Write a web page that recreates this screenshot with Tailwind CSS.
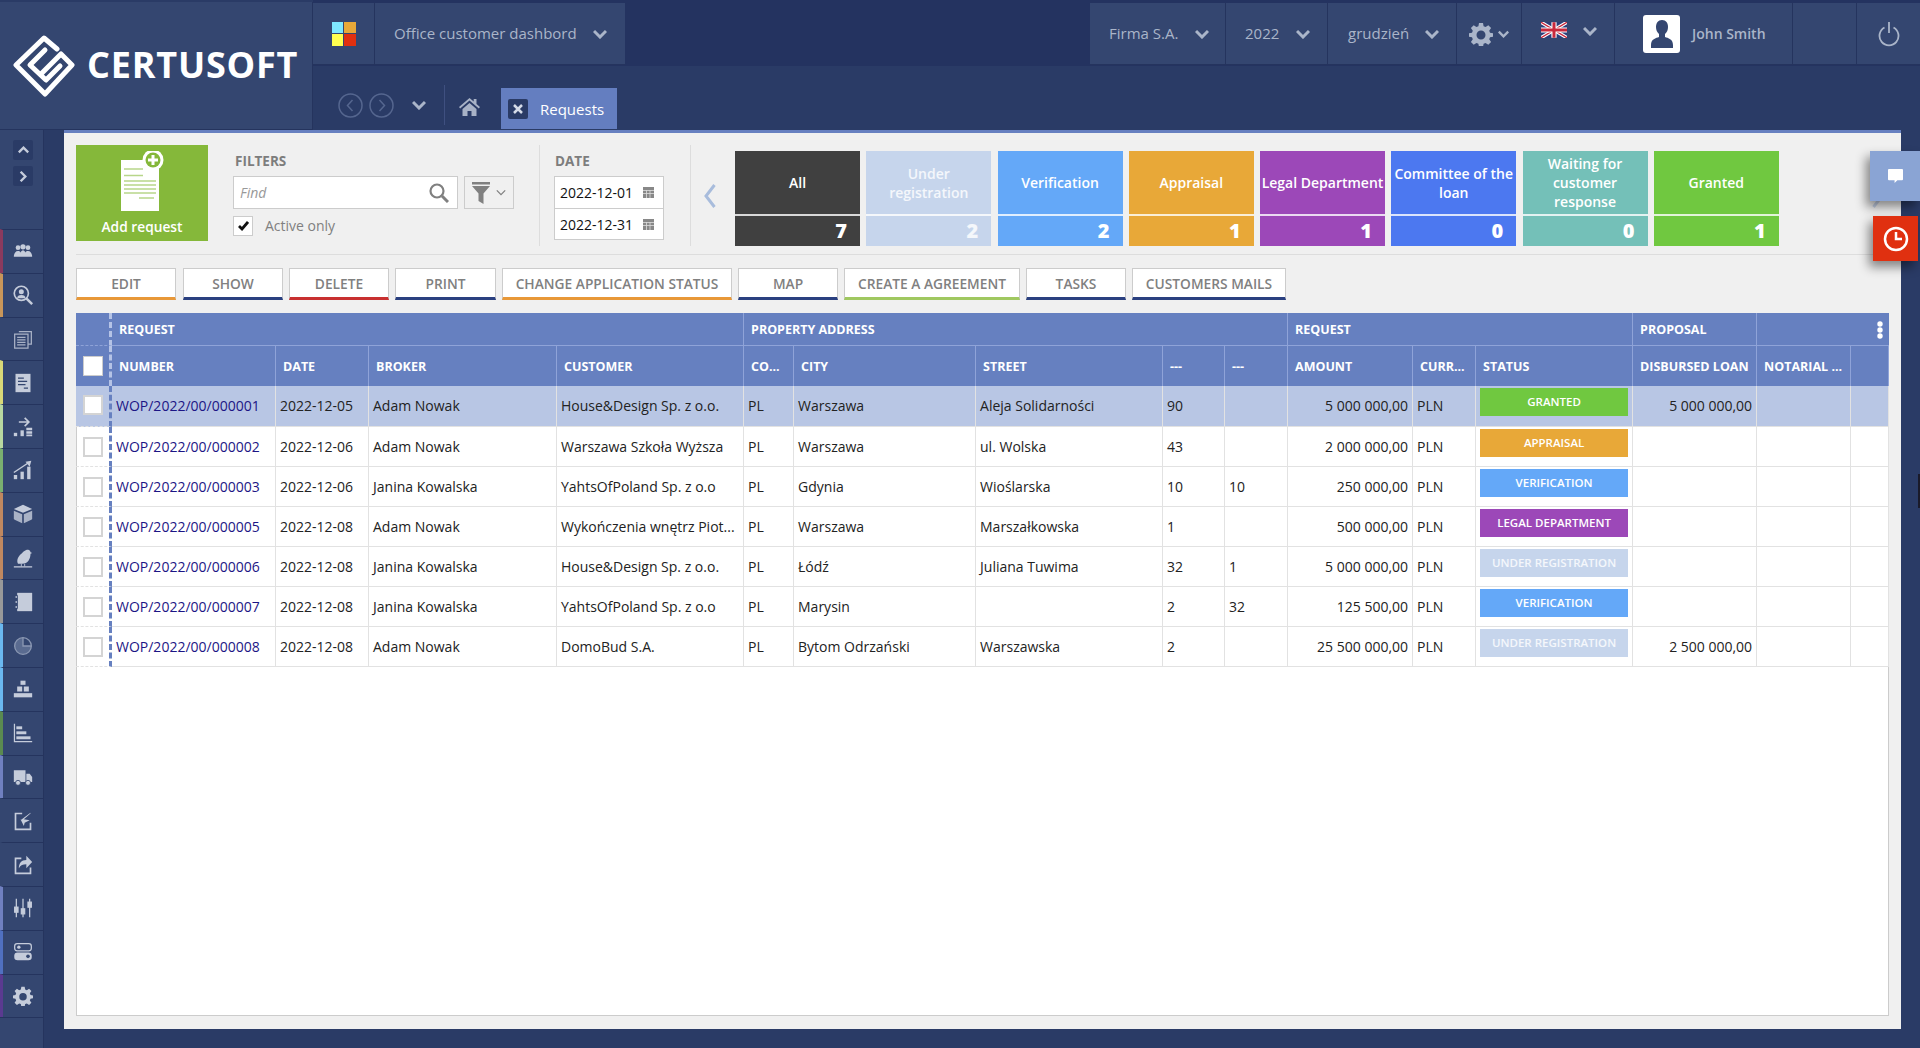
<!DOCTYPE html>
<html lang="en">
<head>
<meta charset="UTF-8">
<title>Requests</title>
<script src="https://cdn.jsdelivr.net/npm/@tailwindcss/browser@4"></script>
</head>
<body class="w-[1920px] h-[1048px] overflow-hidden relative bg-[#2a3b66] font-['Open_Sans',sans-serif] text-[14px] text-[#222]">

<!-- Header -->
<header class="flex h-[130px]">
  <div class="w-[313px] h-[128px] mt-[2px] -mb-[2px] bg-[#344670] border-r border-b border-[#25345e] flex items-center pl-[13px]">
    <svg class="w-[62px] h-[62px] shrink-0" viewBox="0 0 62 62" fill="none" stroke="#fff" stroke-width="5" stroke-linejoin="round" stroke-linecap="round">
      <path d="M44 14 31 3 3 30l29 29 27-29-11-11-19 19"/>
      <path d="M32 15 17 30l16 15 14-14"/>
    </svg>
    <span class="ml-[12px] -mt-[2px] text-[36px] leading-none font-bold text-white tracking-[0.8px]">CERTUSOFT</span>
  </div>
  <div class="flex-1 flex flex-col">
    <div class="h-[66px] bg-[#243360] pt-[3px] flex text-[#aab5c9] text-[15px]">
      <div class="w-[62px] h-[62px] bg-[#344670] border-r border-b border-[#25345e] flex items-center justify-center">
        <div class="grid grid-cols-2 w-[24px] h-[24px] gap-px">
          <span class="bg-[#7fe8ff]"></span><span class="bg-[#e8a838]"></span><span class="bg-[#ffff50]"></span><span class="bg-[#e03010]"></span>
        </div>
      </div>
      <div class="w-[250px] h-[62px] bg-[#344670] border-b border-[#25345e] flex items-center pl-[19px]">
        Office customer dashbord
        <svg class="w-[14px] h-[10px] ml-[16px]" viewBox="0 0 14 10" fill="none" stroke="#aab5c9" stroke-width="3"><path d="m1 2 6 6 6-6"/></svg>
      </div>
      <div class="flex-1"></div>
      <div class="w-[136px] h-[62px] bg-[#344670] border-r border-b border-[#25345e] flex items-center pl-[19px]">
        Firma S.A.
        <svg class="w-[14px] h-[10px] ml-[17px]" viewBox="0 0 14 10" fill="none" stroke="#aab5c9" stroke-width="3"><path d="m1 2 6 6 6-6"/></svg>
      </div>
      <div class="w-[102px] h-[62px] bg-[#344670] border-r border-b border-[#25345e] flex items-center pl-[19px]">
        2022
        <svg class="w-[14px] h-[10px] ml-[17px]" viewBox="0 0 14 10" fill="none" stroke="#aab5c9" stroke-width="3"><path d="m1 2 6 6 6-6"/></svg>
      </div>
      <div class="w-[129px] h-[62px] bg-[#344670] border-r border-b border-[#25345e] flex items-center pl-[20px]">
        grudzień
        <svg class="w-[14px] h-[10px] ml-[16px]" viewBox="0 0 14 10" fill="none" stroke="#aab5c9" stroke-width="3"><path d="m1 2 6 6 6-6"/></svg>
      </div>
      <div class="w-[65px] h-[62px] bg-[#344670] border-r border-b border-[#25345e] flex items-center pl-[12px]">
        <svg class="w-[24px] h-[24px]" viewBox="0 0 24 24" fill="#aab5c9"><path fill-rule="evenodd" d="M10 1h4l.6 3.200 2 .8L19.300 3.200l2.800 2.800L20.200 8.700l.8 2L24 11.300v3.400l-3 .6-.8 2 1.900 2.700-2.800 2.800-2.700-1.900-2 .8-.6 3.300h-4l-.6-3.300-2-.8-2.700 1.900-2.800-2.800 1.900-2.700-.8-2L0 14.700v-3.400l3-.6.800-2L1.900 6l2.800-2.800L7.400 5l2-.8zM12 8.500a4.500 4.500 0 1 0 0 9 4.500 4.500 0 0 0 0-9z"/></svg>
        <svg class="w-[11px] h-[8px] ml-[5px]" viewBox="0 0 14 10" fill="none" stroke="#aab5c9" stroke-width="3"><path d="m1 2 6 6 6-6"/></svg>
      </div>
      <div class="w-[93px] h-[62px] bg-[#344670] border-r border-b border-[#25345e] flex items-start pt-[19px] pl-[19px]">
        <svg class="w-[26px] h-[16px]" viewBox="0 0 60 36">
          <rect width="60" height="36" fill="#2b3f7c"/>
          <path d="M0 0l60 36M60 0 0 36" stroke="#fff" stroke-width="8"/>
          <path d="M0 0l60 36M60 0 0 36" stroke="#c8283c" stroke-width="3"/>
          <path d="M30 0v36M0 18h60" stroke="#fff" stroke-width="12"/>
          <path d="M30 0v36M0 18h60" stroke="#c8283c" stroke-width="7"/>
        </svg>
        <svg class="w-[14px] h-[10px] ml-[16px] mt-[4px]" viewBox="0 0 14 10" fill="none" stroke="#aab5c9" stroke-width="3"><path d="m1 2 6 6 6-6"/></svg>
      </div>
      <div class="w-[178px] h-[62px] bg-[#344670] border-r border-b border-[#25345e] flex items-center pl-[28px] text-[14px] font-semibold">
        <div class="w-[37px] h-[38px] bg-white rounded-[3px] flex items-center justify-center">
          <svg class="w-[24px] h-[30px]" viewBox="0 0 24 30" fill="#344670"><path d="M12 1c-4 0-6 3-6 7 0 3 1 5 3 7v3c-3 1-8 2-8 8v3h22v-3c0-6-5-7-8-8v-3c2-2 3-4 3-7 0-4-2-7-6-7z"/></svg>
        </div>
        <span class="ml-[12px]">John Smith</span>
      </div>
      <div class="w-[64px] h-[62px] bg-[#344670] border-r border-b border-[#25345e]"></div>
      <div class="w-[63px] h-[62px] bg-[#344670] border-b border-[#25345e] flex items-center justify-center">
        <svg class="w-[22px] h-[26px]" viewBox="0 0 22 26" fill="none" stroke="#aab5c9" stroke-width="1.800"><path d="M6.500 6.500a9.500 9.500 0 1 0 9 0M11 1v11"/></svg>
      </div>
    </div>
    <div class="h-[64px] flex items-end pl-[25px] text-white">
      <div class="flex items-center h-[42px] mb-[4px] text-[#55668f]">
        <svg class="w-[25px] h-[25px]" viewBox="0 0 25 25" fill="none" stroke="#55668f" stroke-width="1.500"><circle cx="12.500" cy="12.500" r="11.500"/><path d="m14.500 7-5 5.500 5 5.500"/></svg>
        <svg class="w-[25px] h-[25px] ml-[6px]" viewBox="0 0 25 25" fill="none" stroke="#55668f" stroke-width="1.500"><circle cx="12.500" cy="12.500" r="11.500"/><path d="m10.500 7 5 5.500-5 5.500"/></svg>
        <svg class="w-[14px] h-[10px] ml-[18px]" viewBox="0 0 14 10" fill="none" stroke="#aab5c9" stroke-width="3"><path d="m1 2 6 6 6-6"/></svg>
      </div>
      <div class="w-px h-[40px] bg-[#3f5080] ml-[18px] mb-[5px]"></div>
      <svg class="w-[21px] h-[18px] ml-[14px] mb-[14px]" viewBox="0 0 21 18" fill="#a8b2c6"><path d="M10.500 0 0 9l1.200 1.400L10.500 2.500l9.300 7.900L21 9l-3.500-3V1h-2.800v2.600zM3.500 11v7h5v-5h4v5h5v-7l-7-6z"/></svg>
      <div class="ml-[21px] w-[116px] h-[41px] bg-[#647ec0] flex items-center pl-[7px] mb-px">
        <span class="w-[20px] h-[20px] bg-[#2a3b66] rounded-[2px] flex items-center justify-center">
          <svg class="w-[10px] h-[10px]" viewBox="0 0 10 10" stroke="#d5dbe8" stroke-width="2.500"><path d="m1 1 8 8M9 1 1 9"/></svg>
        </span>
        <span class="ml-[12px] pt-[2px] text-[15px]">Requests</span>
      </div>
    </div>
  </div>
</header>

<div class="flex">
  <!-- Sidebar -->
  <aside class="w-[44px] h-[918px] shrink-0 bg-[#344670] border-r border-[#25345e]">
    <div class="h-[99px] pt-[10px] pl-[13px]">
      <div class="w-[20px] h-[20px] bg-[#2a3b66] rounded-[2px] flex items-center justify-center">
        <svg class="w-[11px] h-[8px]" viewBox="0 0 14 10" fill="none" stroke="#c5ccdb" stroke-width="3"><path d="m1 8 6-6 6 6"/></svg>
      </div>
      <div class="w-[20px] h-[20px] mt-[6px] bg-[#2a3b66] rounded-[2px] flex items-center justify-center">
        <svg class="w-[8px] h-[11px]" viewBox="0 0 10 14" fill="none" stroke="#c5ccdb" stroke-width="3"><path d="m2 1 6 6-6 6"/></svg>
      </div>
    </div>
    <div class="[&>div]:h-[43.800px] [&>div]:border-t [&>div]:border-t-[#25345e] [&>div]:border-l-[3px] [&>div]:flex [&>div]:items-center [&>div]:justify-center [&_svg]:w-[20px] [&_svg]:h-[20px] border-b border-[#25345e]">
      <div class="border-l-[#8b3a5e]"><svg viewBox="0 0 24 24" fill="#c5ccdb"><circle cx="6" cy="8" r="2.800"/><circle cx="12" cy="7" r="3.200"/><circle cx="18" cy="8" r="2.800"/><path d="M1 19c0-4 2-7 5-7s3 2 3 2 1-3 3-3 3 3 3 3 0-2 3-2 5 3 5 7z"/></svg></div>
      <div class="border-l-[#c8965a]"><svg viewBox="0 0 24 24" fill="none" stroke="#c5ccdb" stroke-width="2"><circle cx="10" cy="10" r="8.500"/><path d="m16 16 7 7" stroke-width="3"/><circle cx="10" cy="8" r="3" fill="#c5ccdb" stroke="none"/><path d="M5 16c0-3 2-4 5-4s5 1 5 4z" fill="#c5ccdb" stroke="none"/></svg></div>
      <div class="border-l-transparent"><svg viewBox="0 0 24 24" fill="none" stroke="#a9b2c6" stroke-width="1.500"><path d="M7 3h15v15H18M4 6h14v17H2V6z"/><path d="M5 10h10M5 13h10M5 16h10M5 19h10"/></svg></div>
      <div class="border-l-[#d8d878]"><svg viewBox="0 0 24 24"><path fill-rule="evenodd" fill="#c5ccdb" d="M3 1h18v22H3z"/><path d="M6 6h7M6 10h11M6 14h9M13 18h5" stroke="#344670" stroke-width="1.500"/></svg></div>
      <div class="border-l-[#b8d8a0]"><svg viewBox="0 0 24 24" fill="#c5ccdb"><path d="M7 6h12M14 1l5 5-5 5" fill="none" stroke="#c5ccdb" stroke-width="2"/><rect x="1" y="19" width="4" height="4"/><rect x="9" y="16" width="4" height="7"/><path d="M16 13h7v3h-7zM16 17h7v3h-7zM16 21h7v2h-7z"/></svg></div>
      <div class="border-l-[#7ab070]"><svg viewBox="0 0 24 24" fill="#c5ccdb"><path d="M1 15 19 3" fill="none" stroke="#c5ccdb" stroke-width="1.800"/><path d="m15 2 7-1-2 7z"/><rect x="1" y="18" width="4" height="5"/><rect x="9" y="14" width="4" height="9"/><rect x="17" y="8" width="4" height="15"/></svg></div>
      <div class="border-l-[#c08860]"><svg viewBox="0 0 24 24" fill="#a9b2c6"><path d="M12 1 23 6 12 10.500 1 6z" fill="#c5ccdb"/><path d="M1 8l10 4.200V23L2 19l-1-1zM23 8l-10 4.200V23l9-4 1-1z"/></svg></div>
      <div class="border-l-[#c08860]"><svg viewBox="0 0 24 24" fill="#c5ccdb"><path d="M6 19c-2-4 0-9 4-12 2-2 4-5 8-5 2 0 3 2 3 3l2 1-2 1c0 6-3 12-10 12zM1 22h22v1.500H1z"/><path d="M10 19v3M14 19v3" stroke="#c5ccdb"/></svg></div>
      <div class="border-l-[#999]"><svg viewBox="0 0 24 24" fill="#c5ccdb"><path d="M5 1h18v22H5z"/><path d="M3 6h5M3 12h5M3 18h5" stroke="#c5ccdb" stroke-width="1.800"/><path d="M5 4h1v16H5z" fill="#344670"/></svg></div>
      <div class="border-l-[#6ab8f0]"><svg viewBox="0 0 24 24"><circle cx="12" cy="12" r="10" fill="#5a6b90" stroke="#8a97b2" stroke-width="1.600"/><path d="M12 3v9h9a9 9 0 0 0-9-9z" fill="#344670"/><path d="M12 2v10h10" fill="none" stroke="#8a97b2" stroke-width="1.600"/></svg></div>
      <div class="border-l-[#6ab8f0]"><svg viewBox="0 0 24 24" fill="#c5ccdb"><rect x="9" y="2" width="6" height="5"/><rect x="5" y="9" width="6" height="6"/><rect x="13" y="9" width="6" height="6"/><rect x="1" y="17" width="22" height="5"/></svg></div>
      <div class="border-l-[#5a8a50]"><svg viewBox="0 0 24 24" fill="#c5ccdb"><path d="M1 1h1.500v20.500H23V23H1z"/><rect x="4" y="4" width="7" height="3.500"/><rect x="4" y="10" width="12" height="3.500"/><rect x="4" y="16" width="17" height="3.500"/></svg></div>
      <div class="border-l-[#7080c0]"><svg viewBox="0 0 24 24" fill="#c5ccdb"><path d="M1 4h14v14H1zM16 8h4l3 4v6h-7z"/><circle cx="6" cy="19" r="3" stroke="#344670"/><circle cx="18" cy="19" r="3" stroke="#344670"/></svg></div>
      <div class="border-l-transparent"><svg viewBox="0 0 24 24" fill="none" stroke="#c5ccdb" stroke-width="2"><path d="M11 3H3v19h18v-8"/><path d="M21 2 9 11v-1l4 8 1-4 6-3-7-1 8-7z" fill="#c5ccdb" stroke="none"/></svg></div>
      <div class="border-l-transparent"><svg viewBox="0 0 24 24" fill="none" stroke="#c5ccdb" stroke-width="2"><path d="M10 4H3v18h18v-7"/><path d="M16 1v5C10 6 7 10 7 16c2-4 5-5 9-5v5l7-7.500z" fill="#c5ccdb" stroke="none"/></svg></div>
      <div class="border-l-[#7080c0]"><svg viewBox="0 0 24 24" stroke="#c5ccdb" stroke-width="1.500" fill="#c5ccdb"><path d="M4 1v22M12 1v22M20 1v22"/><rect x="2" y="11" width="4" height="6"/><rect x="10" y="13" width="4" height="6"/><rect x="18" y="5" width="4" height="6"/></svg></div>
      <div class="border-l-[#5070c0]"><svg viewBox="0 0 24 24" fill="none"><rect x="2" y="2" width="20" height="8.500" rx="3" stroke="#c5ccdb" stroke-width="1.500"/><circle cx="7" cy="6.200" r="2" fill="#c5ccdb"/><rect x="1.500" y="12.500" width="21" height="9.500" rx="4" fill="#c5ccdb"/><circle cx="18" cy="17.200" r="2.200" fill="#344670"/></svg></div>
      <div class="border-l-[#5a3a90]"><svg viewBox="0 0 24 24" fill="#c5ccdb"><path fill-rule="evenodd" d="M10 1h4l.6 3.200 2 .8L19.300 3.200l2.800 2.800L20.200 8.700l.8 2L24 11.300v3.400l-3 .6-.8 2 1.900 2.700-2.800 2.800-2.700-1.900-2 .8-.6 3.300h-4l-.6-3.300-2-.8-2.700 1.900-2.800-2.800 1.900-2.700-.8-2L0 14.700v-3.400l3-.6.800-2L1.900 6l2.800-2.800L7.400 5l2-.8zM12 8.500a4.500 4.500 0 1 0 0 9 4.500 4.500 0 0 0 0-9z"/></svg></div>
    </div>
  </aside>

  <div class="w-[20px] shrink-0"></div>

  <!-- Main panel -->
  <main class="w-[1837px] h-[899px] shrink-0 bg-[#f0f0f0] border-t-[3px] border-[#6780c0] pl-[12px] pr-[12px] pt-[12px]">
    <div class="flex h-[101px]">
      <!-- Add request -->
      <div class="w-[132px] h-[96px] bg-[#85b83a] flex flex-col items-center text-white font-semibold text-[13.750px]">
        <svg class="w-[48px] h-[62px] mt-[6px]" viewBox="0 0 48 62">
          <path d="M3 9h38v51H3z" fill="#fff"/>
          <path d="M6 18h19M6 24.500h19M6 30h32M6 34h32M6 38h32M6 42h32M21 47h15" stroke="#b8d68a" stroke-width="1.500"/>
          <circle cx="35" cy="9" r="10.500" fill="#fff"/>
          <circle cx="35" cy="9" r="7.500" fill="#85b83a"/>
          <path d="M35 4v10M30 9h10" stroke="#fff" stroke-width="3"/>
        </svg>
        <span class="mt-[4px] leading-[20px]">Add request</span>
      </div>
      <!-- Filters -->
      <div class="ml-[25px] w-[281px] shrink-0">
        <div class="h-[31px] flex items-center pl-[2px] pt-[2px] font-bold text-[#7d7d7d] text-[13.500px]">FILTERS</div>
        <div class="flex gap-[6px]">
          <div class="w-[225px] h-[33px] bg-white border border-[#ccc] flex items-center pl-[6px] pr-[8px] justify-between italic text-[#999] text-[14px]">
            Find
            <svg class="w-[20px] h-[20px]" viewBox="0 0 20 20" fill="none" stroke="#808080" stroke-width="2.200"><circle cx="8" cy="8" r="6.500"/><path d="m13 13 6 6" stroke-width="3"/></svg>
          </div>
          <div class="w-[50px] h-[33px] border border-[#ccc] flex items-center pl-[7px]">
            <svg class="w-[18px] h-[22px]" viewBox="0 0 18 22" fill="#808080"><path d="M0 0h18v2.500H0zM0 4h18l-6.500 7.500V22l-5-3v-7.500z"/></svg>
            <svg class="w-[10px] h-[7px] ml-[6px]" viewBox="0 0 14 10" fill="none" stroke="#808080" stroke-width="1.800"><path d="m1 2 6 6 6-6"/></svg>
          </div>
        </div>
        <div class="flex items-center mt-[6px]">
          <div class="w-[20px] h-[20px] bg-white border border-[#ccc] flex items-center justify-center">
            <svg class="w-[11px] h-[10px]" viewBox="0 0 11 10" fill="none" stroke="#111" stroke-width="2.800"><path d="m1 5 3 3 6-7"/></svg>
          </div>
          <span class="ml-[12px] text-[#808080]">Active only</span>
        </div>
      </div>
      <div class="ml-[25px] w-px bg-[#ddd]"></div>
      <!-- Date -->
      <div class="ml-[14px] w-[110px] shrink-0">
        <div class="h-[31px] flex items-center pl-[1px] pt-[2px] font-bold text-[#7d7d7d] text-[13.500px]">DATE</div>
        <div class="h-[33px] bg-white border border-[#ccc] flex items-center justify-between pl-[5px] pr-[9px] text-[#111]">2022-12-01
          <svg class="w-[11px] h-[11px]" viewBox="0 0 11 11" fill="#888"><path d="M0 0h11v11H0z"/><path d="M0 3.500h11M0 6.500h11M3.500 3v8M7 3v8" stroke="#ddd" stroke-width=".8"/></svg>
        </div>
        <div class="h-[32px] -mt-px bg-white border border-[#ccc] flex items-center justify-between pl-[5px] pr-[9px] text-[#111]">2022-12-31
          <svg class="w-[11px] h-[11px]" viewBox="0 0 11 11" fill="#888"><path d="M0 0h11v11H0z"/><path d="M0 3.500h11M0 6.500h11M3.500 3v8M7 3v8" stroke="#ddd" stroke-width=".8"/></svg>
        </div>
      </div>
      <div class="ml-[26px] w-px bg-[#ddd]"></div>
      <div class="ml-[13px] w-[12px] flex items-center">
        <svg class="w-[12px] h-[24px]" viewBox="0 0 12 24" fill="none" stroke="#a8bcdc" stroke-width="3"><path d="M10.500 1 2 12l8.500 11"/></svg>
      </div>
      <!-- Status cards -->
      <div class="ml-[19px] mt-[6px] flex gap-[6.250px] text-white font-semibold leading-[19px] text-center [&>div]:w-[125px] [&>div]:h-[95px] [&>div]:flex [&>div]:flex-col [&>div>p]:h-[65px] [&>div>p]:flex [&>div>p]:items-center [&>div>p]:justify-center [&>div>p]:border-b-2 [&>div>p]:border-white/80 [&>div>b]:flex-1 [&>div>b]:text-right [&>div>b]:pr-[13px] [&>div>b]:text-[20px] [&>div>b]:leading-[30px]">
        <div class="bg-[#404040]"><p>All</p><b>7</b></div>
        <div class="bg-[#c6d5ec] text-white/80"><p>Under<br>registration</p><b>2</b></div>
        <div class="bg-[#64a8f8]"><p>Verification</p><b>2</b></div>
        <div class="bg-[#e8a838]"><p>Appraisal</p><b>1</b></div>
        <div class="bg-[#9c48b8]"><p>Legal Department</p><b>1</b></div>
        <div class="bg-[#4c78f0]"><p>Committee of the<br>loan</p><b>0</b></div>
        <div class="bg-[#74c0b8]"><p>Waiting for<br>customer<br>response</p><b>0</b></div>
        <div class="bg-[#70c840]"><p>Granted</p><b>1</b></div>
      </div>
    </div>
    <div class="h-px bg-[#ddd] mt-[8px]"></div>
    <!-- Action buttons -->
    <div class="mt-[13px] flex gap-[6px] font-semibold text-[#808080] text-[13.750px] text-center leading-[30px] [&>div]:h-[32px] [&>div]:bg-white [&>div]:border [&>div]:border-[#ccc] [&>div]:border-b-[3px]">
      <div class="w-[100px] border-b-[#e89838]!">EDIT</div>
      <div class="w-[100px] ml-px border-b-[#2a4080]!">SHOW</div>
      <div class="w-[100px] border-b-[#c83030]!">DELETE</div>
      <div class="w-[101px] border-b-[#2a4080]!">PRINT</div>
      <div class="w-[230px] border-b-[#e89838]!">CHANGE APPLICATION STATUS</div>
      <div class="w-[100px] border-b-[#2a4080]!">MAP</div>
      <div class="w-[176px] border-b-[#a0c860]!">CREATE A AGREEMENT</div>
      <div class="w-[100px] border-b-[#2a4080]!">TASKS</div>
      <div class="w-[154px] border-b-[#2a4080]!">CUSTOMERS MAILS</div>
    </div>
    <!-- Table -->
    <div class="mt-[13px] h-[703px] bg-white border-x border-b border-[#ccc]">
      <table class="w-[1813px] table-fixed border-separate border-spacing-0 -ml-px">
        <colgroup>
          <col class="w-[36px]"><col class="w-[164px]"><col class="w-[93px]"><col class="w-[188px]"><col class="w-[187px]"><col class="w-[50px]"><col class="w-[182px]"><col class="w-[187px]"><col class="w-[62px]"><col class="w-[63px]"><col class="w-[125px]"><col class="w-[63px]"><col class="w-[157px]"><col class="w-[124px]"><col class="w-[94px]"><col class="w-[38px]">
        </colgroup>
        <thead class="bg-[#6680c0] text-white text-[12.500px] font-bold text-left [&_th]:pl-[7px] [&_th]:pt-[2px] [&_th]:border-r [&_th]:border-[#8fa3d8] [&_th]:truncate">
          <tr class="h-[33px] [&>th]:border-b">
            <th class="border-r-[3px]! border-dashed border-r-[#b5c3e6]!"></th>
            <th colspan="4">REQUEST</th>
            <th colspan="5">PROPERTY ADDRESS</th>
            <th colspan="3">REQUEST</th>
            <th>PROPOSAL</th>
            <th colspan="2" class="relative border-r-0!">
              <svg class="absolute right-[6px] top-[8px] w-[6px] h-[18px]" viewBox="0 0 6 18" fill="#fff"><circle cx="3" cy="3" r="2.700"/><circle cx="3" cy="9" r="2.700"/><circle cx="3" cy="15" r="2.700"/></svg>
            </th>
          </tr>
          <tr class="h-[40px]">
            <th class="pl-[7px]! pt-0! border-r-[3px]! border-dashed border-r-[#b5c3e6]!"><div class="w-[20px] h-[20px] bg-white border border-[#ccc]"></div></th>
            <th>NUMBER</th><th>DATE</th><th>BROKER</th><th>CUSTOMER</th><th>CO...</th><th>CITY</th><th>STREET</th><th>---</th><th>---</th><th>AMOUNT</th><th>CURR...</th><th>STATUS</th><th>DISBURSED LOAN</th><th>NOTARIAL ...</th><th></th>
          </tr>
        </thead>
        <tbody class="[&_td]:border-r [&_td]:border-b [&_td]:border-[#e2e2e2] [&_td]:pl-[4px] [&_td]:truncate [&_tr]:h-[40px] [&_a]:text-[#1c1585] [&_td:first-child]:pl-[7px]! [&_td:first-child]:border-r-[3px] [&_td:first-child]:border-dashed [&_td:first-child]:border-r-[#6680c0] [&_i]:block [&_i]:w-[20px] [&_i]:h-[20px] [&_i]:bg-white [&_i]:border-2 [&_i]:border-[#d4d4d4] [&_em]:block [&_em]:not-italic [&_em]:w-[148px] [&_em]:h-[28px] [&_em]:text-center [&_em]:text-white [&_em]:text-[11.500px] [&_em]:font-semibold [&_em]:leading-[27px] [&_em]:-mt-[8px]">
          <tr class="bg-[#b8c6e4] h-[41px]! [&>td]:pb-[2px]">
            <td><i></i></td><td><a>WOP/2022/00/000001</a></td><td>2022-12-05</td><td>Adam Nowak</td><td>House&amp;Design Sp. z o.o.</td><td>PL</td><td>Warszawa</td><td>Aleja Solidarności</td><td>90</td><td></td><td class="text-right pr-[4px]">5 000 000,00</td><td>PLN</td><td><em class="bg-[#70c840] mt-[-6px]!">GRANTED</em></td><td class="text-right pr-[4px]">5 000 000,00</td><td></td><td></td>
          </tr>
          <tr>
            <td><i></i></td><td><a>WOP/2022/00/000002</a></td><td>2022-12-06</td><td>Adam Nowak</td><td>Warszawa Szkoła Wyższa</td><td>PL</td><td>Warszawa</td><td>ul. Wolska</td><td>43</td><td></td><td class="text-right pr-[4px]">2 000 000,00</td><td>PLN</td><td><em class="bg-[#e8a838]">APPRAISAL</em></td><td></td><td></td><td></td>
          </tr>
          <tr>
            <td><i></i></td><td><a>WOP/2022/00/000003</a></td><td>2022-12-06</td><td>Janina Kowalska</td><td>YahtsOfPoland Sp. z o.o</td><td>PL</td><td>Gdynia</td><td>Wioślarska</td><td>10</td><td>10</td><td class="text-right pr-[4px]">250 000,00</td><td>PLN</td><td><em class="bg-[#64a8f8]">VERIFICATION</em></td><td></td><td></td><td></td>
          </tr>
          <tr>
            <td><i></i></td><td><a>WOP/2022/00/000005</a></td><td>2022-12-08</td><td>Adam Nowak</td><td>Wykończenia wnętrz Piot...</td><td>PL</td><td>Warszawa</td><td>Marszałkowska</td><td>1</td><td></td><td class="text-right pr-[4px]">500 000,00</td><td>PLN</td><td><em class="bg-[#9c48b8]">LEGAL DEPARTMENT</em></td><td></td><td></td><td></td>
          </tr>
          <tr>
            <td><i></i></td><td><a>WOP/2022/00/000006</a></td><td>2022-12-08</td><td>Janina Kowalska</td><td>House&amp;Design Sp. z o.o.</td><td>PL</td><td>Łódź</td><td>Juliana Tuwima</td><td>32</td><td>1</td><td class="text-right pr-[4px]">5 000 000,00</td><td>PLN</td><td><em class="bg-[#c6d5ec] text-white/80!">UNDER REGISTRATION</em></td><td></td><td></td><td></td>
          </tr>
          <tr>
            <td><i></i></td><td><a>WOP/2022/00/000007</a></td><td>2022-12-08</td><td>Janina Kowalska</td><td>YahtsOfPoland Sp. z o.o</td><td>PL</td><td>Marysin</td><td></td><td>2</td><td>32</td><td class="text-right pr-[4px]">125 500,00</td><td>PLN</td><td><em class="bg-[#64a8f8]">VERIFICATION</em></td><td></td><td></td><td></td>
          </tr>
          <tr>
            <td><i></i></td><td><a>WOP/2022/00/000008</a></td><td>2022-12-08</td><td>Adam Nowak</td><td>DomoBud S.A.</td><td>PL</td><td>Bytom Odrzański</td><td>Warszawska</td><td>2</td><td></td><td class="text-right pr-[4px]">25 500 000,00</td><td>PLN</td><td><em class="bg-[#c6d5ec] text-white/80!">UNDER REGISTRATION</em></td><td class="text-right pr-[4px]">2 500 000,00</td><td></td><td></td>
          </tr>
        </tbody>
      </table>
    </div>
  </main>
</div>

<!-- Floating side buttons -->
<svg class="absolute left-[1872px] top-[184px] w-[12px] h-[24px]" viewBox="0 0 12 24" fill="none" stroke="#c5d0e4" stroke-width="3"><path d="M1.500 1 10 12 1.500 23"/></svg>
<div class="absolute left-[1870px] top-[151px] w-[50px] h-[50px] bg-[#8aa4d4] shadow-[-4px_6px_10px_rgba(0,0,0,0.45)] flex items-center justify-center">
  <svg class="w-[15px] h-[15px]" viewBox="0 0 16 16" fill="#fff"><path d="M1 0h14a1 1 0 0 1 1 1v10a1 1 0 0 1-1 1h-5l-3 3v-3H1a1 1 0 0 1-1-1V1a1 1 0 0 1 1-1z"/></svg>
</div>
<div class="absolute left-[1873px] top-[216px] w-[45px] h-[45px] bg-[#e03010] shadow-[-4px_6px_10px_rgba(0,0,0,0.45)] flex items-center justify-center">
  <svg class="w-[26px] h-[26px]" viewBox="0 0 26 26" fill="none" stroke="#fff" stroke-width="2.500"><circle cx="13" cy="13" r="11"/><path d="M13 6v7h6"/></svg>
</div>
<div class="absolute left-[1918px] top-[474px] w-[2px] h-[34px] bg-[#1a1a2a]"></div>
</body>
</html>
